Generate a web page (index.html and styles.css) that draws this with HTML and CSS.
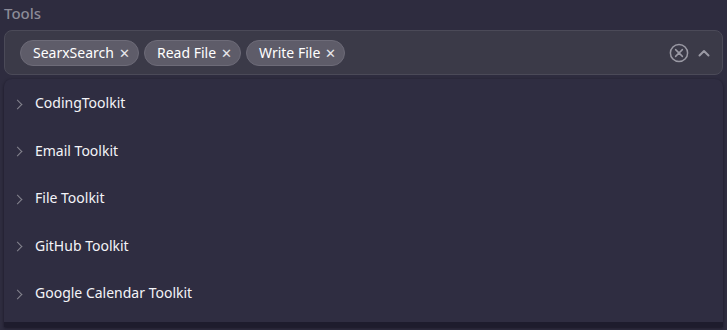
FILE: index.html
```html
<!DOCTYPE html>
<html lang="en">
<head>
    <meta charset="UTF-8">
    <meta name="viewport" content="width=device-width, initial-scale=1.0">
    <title>Tools</title>
    <link rel="stylesheet" href="styles.css">
</head>
<body>
    <div class="field">
        <label class="field-label">Tools</label>
        <div class="select-box">
            <div class="chips">
                <span class="chip">SearxSearch <span class="chip-x">&#x2715;</span></span>
                <span class="chip">Read File <span class="chip-x">&#x2715;</span></span>
                <span class="chip">Write File <span class="chip-x">&#x2715;</span></span>
            </div>
            <div class="select-icons">
                <svg class="clear-icon" width="20" height="20" viewBox="0 0 20 20">
                    <circle cx="10" cy="10" r="8.6" fill="none" stroke="currentColor" stroke-width="1.5"/>
                    <path d="M6.6 6.6 L13.4 13.4 M13.4 6.6 L6.6 13.4" stroke="currentColor" stroke-width="1.5" stroke-linecap="round"/>
                </svg>
                <svg class="toggle-icon" width="14" height="14" viewBox="0 0 14 14">
                    <path d="M2.5 9.5 L7 5 L11.5 9.5" fill="none" stroke="currentColor" stroke-width="2" stroke-linecap="round" stroke-linejoin="round"/>
                </svg>
            </div>
        </div>
        <ul class="menu">
            <li class="menu-item"><span class="caret"></span>CodingToolkit</li>
            <li class="menu-item"><span class="caret"></span>Email Toolkit</li>
            <li class="menu-item"><span class="caret"></span>File Toolkit</li>
            <li class="menu-item"><span class="caret"></span>GitHub Toolkit</li>
            <li class="menu-item"><span class="caret"></span>Google Calendar Toolkit</li>
        </ul>
    </div>
</body>
</html>
```

FILE: styles.css
```css
/* styles.css */

body {
    margin: 0;
    background-color: #2e2c3f;
    font-family: "Noto Sans", "Open Sans", sans-serif;
    font-size: 14px;
    color: #f2f2f5;
    height: 100vh;
    overflow: hidden;
}

.field {
    padding: 4px 4px 0 4px;
}

.field-label {
    display: block;
    color: #8c8b98;
    font-size: 15px;
    font-weight: 500;
    line-height: 18px;
    height: 26px;
}

.select-box {
    display: flex;
    align-items: center;
    justify-content: space-between;
    height: 43px;
    padding: 0 15px;
    background-color: #3b3a48;
    border: 1px solid #4b4a58;
    border-radius: 8px;
}

.chips {
    display: flex;
    gap: 5px;
}

.chip {
    display: inline-flex;
    align-items: center;
    height: 24px;
    padding: 0 8px 0 12px;
    background-color: #5e5c69;
    border: 1px solid #6d6b78;
    border-radius: 13px;
    color: #ffffff;
    white-space: nowrap;
}

.chip-x {
    margin-left: 5px;
    font-size: 13px;
    color: #e6e6ea;
}

.select-icons {
    display: flex;
    align-items: center;
    gap: 8px;
    color: #9a99a4;
    margin-right: -4px;
}

.menu {
    list-style: none;
    margin: 4px 0 0 0;
    padding: 0;
    height: 243px;
    background-color: #2f2d41;
    border-radius: 8px 8px 0 0;
    box-shadow: 0 1px 3px rgba(10, 8, 20, 0.6);
    border-bottom: 5px solid #1e1c2d;
}

.menu-item {
    display: flex;
    align-items: center;
    height: 47.5px;
    padding-left: 6px;
    color: #f4f4f8;
}

.caret {
    width: 6px;
    height: 6px;
    margin: 3px 14px 0 4px;
    border-right: 1.4px solid #85848f;
    border-top: 1.4px solid #85848f;
    transform: rotate(45deg);
}
```
